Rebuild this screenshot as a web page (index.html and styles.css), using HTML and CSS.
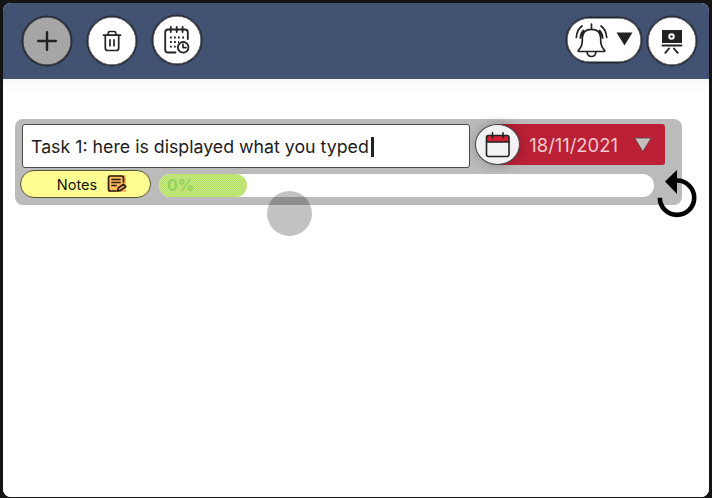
FILE: index.html
```html
<!DOCTYPE html>
<html lang="en">
<head>
<meta charset="utf-8">
<title>Tasks</title>
<link rel="stylesheet" href="styles.css">
</head>
<body>
<div class="window">
  <header class="toolbar">
    <div class="tools">
      <button class="round add" aria-label="Add"><svg width="20" height="20" viewBox="0 0 20 20"><path d="M10 1.200v17.600M1.200 10h17.600" stroke-width="2.400"/></svg></button>
      <button class="round trash" aria-label="Delete"><svg width="20" height="22" viewBox="0 0 20 22"><path d="M1.500 5.200h17M6.200 5V3q0-1.500 1.500-1.500h4.600q1.500 0 1.500 1.500v2M3.300 5.200v13q0 2.300 2.300 2.300h8.800q2.300 0 2.300-2.300v-13M8 9.800v6M12 9.800v6" stroke-width="1.700"/></svg></button>
      <button class="round plan" aria-label="Schedule"><svg width="26" height="28" viewBox="0 0 26 28"><path d="M11.500 26.500H4q-2.800 0-2.800-2.800V6.300Q1.200 3.500 4 3.500H21q2.800 0 2.800 2.800V13M6.800 1v5M12.700 1v5M18.600 1v5" stroke-width="1.800"/><path d="M6 11.500h1.800M10 11.500h1.800M14 11.500h1.800M18.200 11.500H20M6 16h1.800M10 16h1.800M6 20.700h1.800M10 20.700h1.800M14 16h1" stroke-width="1.800" stroke-linecap="butt"/><circle cx="19.200" cy="21.300" r="5.300" stroke-width="1.800"/><path d="M19 18.300v3.300H22" stroke-width="1.700"/></svg></button>
    </div>
    <div class="tools">
      <button class="alerts" aria-label="Alerts">
        <svg width="33" height="35" viewBox="0 0 33 35"><path d="M16.500 1v5M3.800 28.500q-.9-.2-.5-1.200Q7 24 7.300 18v-3.500Q8 6.300 16.500 6.300T25.700 14.500V18q.3 6 4 9.300.4 1-.5 1.200zM12 29q.6 4.500 4.500 4.500T21 29M1.300 14.500Q1.800 6.500 7 3M5.300 15q.3-5 3.200-7.500M31.700 14.500Q31.200 6.500 26 3M27.700 15q-.3-5-3.200-7.500" stroke-width="1.700"/></svg>
        <svg width="17" height="14" viewBox="0 0 17 14"><path class="solid" d="M.5.500h16l-8 13z"/></svg>
      </button>
      <button class="round board" aria-label="Board"><svg width="22" height="24" viewBox="0 0 22 24"><path class="solid" d="M1 0h20v13H1z"/><path d="M1.500 15.500h19M8 18.500l-3.700 4.300M13 18.500l3.700 4.300" stroke-width="1.900"/><circle class="eye" cx="10.500" cy="6.500" r="3.200"/><circle class="solid" cx="10.500" cy="6.500" r="1.200"/></svg></button>
    </div>
  </header>
  <main class="content">
    <section class="task">
      <div class="row">
        <div class="field"><span>Task 1: here is displayed what you typed</span><i class="caret"></i></div>
        <div class="date">
          <span class="date-icon"><svg width="26" height="26" viewBox="0 0 26 26"><path class="band" d="M2 4h22v6H2z"/><rect x="1.500" y="3.500" width="22.500" height="21" rx="2"/><path d="M1.500 10h22.500M7.500.8v5M18 .8v5"/></svg></span>
          <time>18/11/2021</time>
          <svg class="drop" width="18" height="15" viewBox="0 0 18 15"><path d="M.8 1h16.400L9 14.300z"/></svg>
        </div>
      </div>
      <div class="row lower">
        <button class="notes">Notes<svg width="20" height="18" viewBox="0 0 20 18"><path class="paper" d="M1 0h18v17H1z"/><path d="M9 16H3.500Q1.500 16 1.500 14V3Q1.500 1 3.500 1h11Q16.500 1 16.500 3v4M5 4.500h8M5 7.500h8M5 10.500h4"/><path d="M10.500 16l1-3.200 5-3.500 2.300 2.300-5 3.700z"/></svg></button>
        <div class="progress"><div class="bar" style="width:88px">0%</div></div>
      </div>
      <svg class="undo" width="42" height="50" viewBox="0 0 42 50"><path class="ring" d="M4.800 28.700a17.200 17.200 0 1 0 17.200-17.200h-3"/><path d="M10 12.500L22 1v24z"/></svg>
      <span class="touch"></span>
    </section>
  </main>
</div>
</body>
</html>
```

FILE: styles.css
```css
* { box-sizing: border-box; }
body {
  margin: 0;
  width: 712px;
  height: 498px;
  padding: 3px 3px 1px;
  background: #141414;
  font-family: Inter, "Liberation Sans", sans-serif;
  overflow: hidden;
}
.window {
  height: 494px;
  border-radius: 8px;
  background: #fff;
  overflow: hidden;
}
.toolbar {
  display: flex;
  justify-content: space-between;
  height: 76px;
  padding: 12px 12px 0 19px;
  background: #415273;
}
.tools { display: flex; align-items: flex-start; }
button {
  display: flex;
  align-items: center;
  justify-content: center;
  padding: 0;
  border: 1px solid #242830;
  background: #fff;
  font: inherit;
  color: #111;
}
.toolbar button { box-shadow: 0 0 0 .5px #242830, inset 0 0 0 .5px #242830; }
svg {
  display: block;
  flex: none;
  fill: none;
  stroke: #222;
  stroke-width: 1.6;
  stroke-linecap: round;
  stroke-linejoin: round;
}
.solid { fill: #222; stroke: none; }
.round { width: 50px; height: 50px; border-radius: 50%; }
.add { margin-top: 1px; background: #a6a6a6; }
.trash { margin: 1px 15px 0; padding-bottom: 1px; }
.alerts {
  gap: 8px;
  width: 76px;
  height: 46px;
  margin: 2px 5px 0 0;
  border-radius: 24px;
}
.alerts svg:last-child { margin-bottom: 2px; }
.board { margin-top: 1px; padding-top: 1px; }
.eye { fill: #fff; stroke: none; }
.content {
  height: 418px;
  padding: 40px 27px 0 12px;
  background: linear-gradient(#f7f7f7, #fff 14px);
}
.task {
  position: relative;
  height: 86px;
  padding: 5px 17px 0 7px;
  border-radius: 8px;
  background: #bbb;
}
.row { display: flex; }
.field {
  display: flex;
  align-items: center;
  width: 449px;
  height: 44px;
  padding: 0 0 0 8px;
  border: 1px solid #4b4b4b;
  border-radius: 3px;
  background: #fff;
  color: #1c1c1c;
  font-size: 17.75px;
  white-space: nowrap;
}
.caret { width: 3px; height: 20px; margin: 2px 0 0 2px; background: #222; }
.date {
  display: flex;
  align-items: center;
  width: 169px;
  height: 41px;
  margin-left: 26px;
  border-radius: 3px;
  background: #bb2036;
  color: #f3cbd0;
  font-size: 18.4px;
}
.date-icon {
  display: flex;
  align-items: center;
  justify-content: center;
  flex: none;
  width: 45px;
  height: 41px;
  margin: 0 9px 0 -21px;
  border: 1px solid #444;
  border-radius: 50%;
  background: #f2f2f4;
  box-shadow: 0 0 12px rgba(0, 0, 0, .25);
}
.band { fill: #d51f35; stroke: none; }
.drop { margin-left: 16px; fill: #c5bfc1; stroke: #6d4349; stroke-width: 1; }
.lower { margin: 2px 0 0 -2px; }
.notes {
  width: 131px;
  height: 28px;
  gap: 10px;
  padding-left: 13px;
  border: 1px solid #55553c;
  border-radius: 14px;
  background: #fffd91;
  font-size: 14.5px;
}
.notes svg { stroke: #2b1c10; stroke-width: 1.7; }
.notes .paper { fill: #ffb85c; stroke: none; }
.progress {
  width: 495px;
  height: 23px;
  margin: 4px 0 0 8px;
  border-radius: 12px;
  background: #fff;
}
.bar {
  height: 23px;
  padding-left: 8px;
  border-radius: 12px;
  background: repeating-conic-gradient(#b4e05f 0 25%, #c9e88b 0 50%) 0 0 / 2px 2px;
  color: #8fd25d;
  font-size: 16px;
  font-weight: 700;
  line-height: 23px;
}
.undo {
  position: absolute;
  left: 640px;
  top: 50px;
  fill: #000;
  stroke: none;
}
.ring { fill: none; stroke: #000; stroke-width: 4.6; stroke-linecap: butt; stroke-linejoin: miter; }
.touch {
  position: absolute;
  left: 252px;
  top: 72px;
  width: 45px;
  height: 45px;
  border-radius: 50%;
  background: rgba(0, 0, 0, .24);
}
```
